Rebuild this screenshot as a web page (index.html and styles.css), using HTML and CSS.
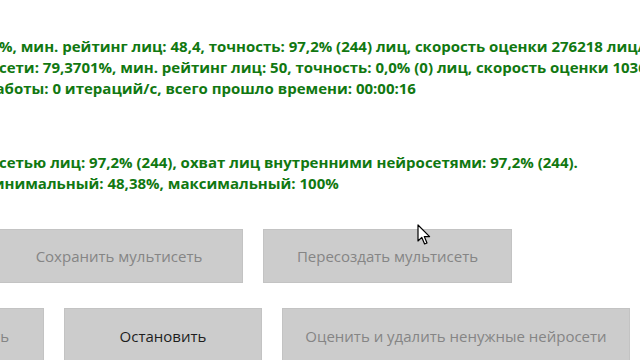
FILE: index.html
```html
<!DOCTYPE html>
<html lang="ru">
<head>
<meta charset="utf-8">
<link rel="stylesheet" href="styles.css">
</head>
<body>
<div class="page">
  <div class="log">
    <div class="line l1">%, мин. рейтинг лиц: 48,4, точность: 97,2% (244) лиц, скорость оценки 276218 лиц/с</div>
    <div class="line l2">сети: 79,3701%, мин. рейтинг лиц: 50, точность: 0,0% (0) лиц, скорость оценки 103683 лиц/с</div>
    <div class="line l3">работы: 0 итераций/с, всего прошло времени: 00:00:16</div>
  </div>
  <div class="log log2">
    <div class="line l4">сетью лиц: 97,2% (244), охват лиц внутренними нейросетями: 97,2% (244).</div>
    <div class="line l5">минимальный: 48,38%, максимальный: 100%</div>
  </div>
  <div class="row row1">
    <div class="btn disabled b1">Сохранить мультисеть</div>
    <div class="btn disabled b2">Пересоздать мультисеть</div>
  </div>
  <div class="row row2">
    <div class="btn disabled b3">Запустить</div>
    <div class="btn b4">Остановить</div>
    <div class="btn disabled b5">Оценить и удалить ненужные нейросети</div>
  </div>
  <svg class="cursor" width="14" height="22" viewBox="0 0 14 22">
    <path d="M1 1 L1 17 L4.8 13.4 L7.6 20 L10 19 L7.3 12.6 L12.6 12.6 Z" fill="#fff" stroke="#000" stroke-width="1.2" stroke-linejoin="round"/>
  </svg>
</div>
</body>
</html>
```

FILE: styles.css
```css
html, body {
  margin: 0;
  padding: 0;
  background: #ffffff;
}
.page {
  position: relative;
  width: 640px;
  height: 360px;
  overflow: hidden;
  font-family: "Open Sans", "Noto Sans", sans-serif;
}
.log {
  padding-top: 36px;
  display: flex;
  flex-direction: column;
}
.log2 {
  padding-top: 53px;
}
.line {
  white-space: nowrap;
  font-weight: 700;
  font-size: 15px;
  line-height: 21px;
  color: #117811;
}
.l1 { margin-left: -1px; }
.l2 { margin-left: -1px; }
.l3 { margin-left: -14px; }
.l4 { margin-left: -1px; }
.l5 { margin-left: -19px; }
.row {
  display: flex;
  gap: 20px;
}
.row1 {
  margin-top: 35px;
  margin-left: -5px;
}
.row2 {
  margin-top: 25px;
  margin-left: -154px;
}
.btn {
  box-sizing: border-box;
  background: #cccccc;
  border: 1px solid #c3c3c3;
  display: flex;
  align-items: center;
  justify-content: center;
  font-size: 15px;
  color: #1e1e1e;
  flex: none;
}
.btn.disabled {
  color: #858585;
}
.row1 .btn { height: 54px; }
.row2 .btn { height: 56px; }
.b1 { width: 248px; }
.b2 { width: 249px; }
.b3 { width: 198px; justify-content: flex-end; padding-right: 34px; }
.b4 { width: 198px; }
.b5 { width: 348px; }
.cursor {
  position: absolute;
  left: 417px;
  top: 224px;
}
```
